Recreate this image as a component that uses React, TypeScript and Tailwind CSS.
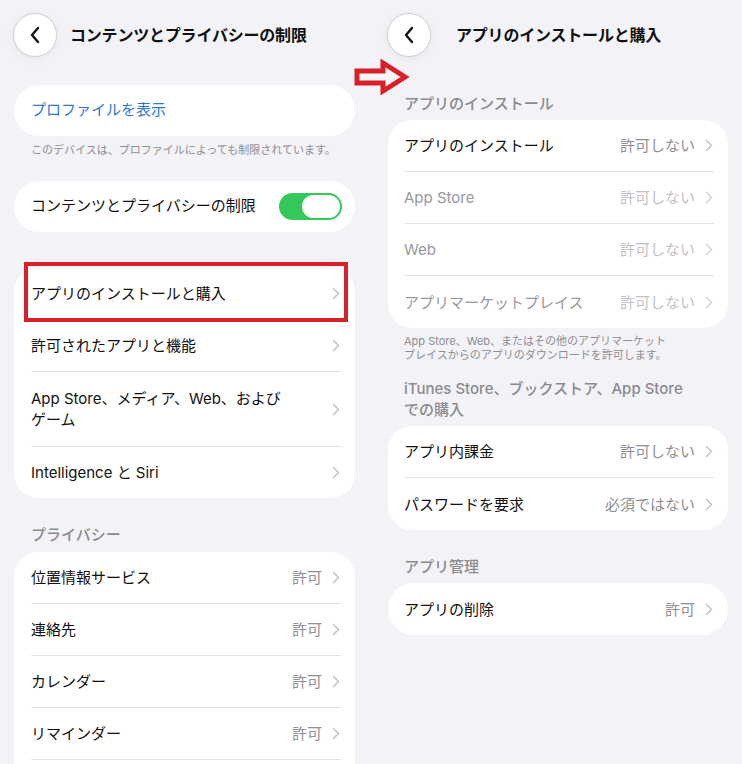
import React from 'react'

const font = { fontFamily: "Inter, 'Noto Sans CJK JP', 'Noto Sans', sans-serif" }

// small grey chevron used at the right end of a row
const Chevron = ({ light = false }: { light?: boolean }) => (
  <svg width="8" height="13" viewBox="0 0 8 13" className="shrink-0">
    <polyline
      points="1.5,1.5 6.5,6.5 1.5,11.5"
      fill="none"
      stroke={light ? '#d4d4d8' : '#c4c4c8'}
      strokeWidth="1.6"
      strokeLinecap="round"
      strokeLinejoin="round"
    />
  </svg>
)

const BackButton = () => (
  <div className="w-[44px] h-[44px] -ml-[1px] shrink-0 rounded-full bg-white border border-[#cfcfd3] shadow-[0_2px_10px_rgba(0,0,0,0.06)] flex items-center justify-center">
    <svg width="12" height="18" viewBox="0 0 12 18">
      <polyline
        points="9,2 3,9 9,16"
        fill="none"
        stroke="#111"
        strokeWidth="2.4"
        strokeLinecap="round"
        strokeLinejoin="round"
      />
    </svg>
  </div>
)

interface RowProps {
  label: React.ReactNode
  value?: string
  dim?: boolean
  last?: boolean
  height?: string
  pl?: string
}

const Row = ({ label, value, dim = false, last = false, height = 'h-[52px]', pl = 'pl-[17px]' }: RowProps) => (
  <div className={`${pl} pr-[14px]`}>
    <div
      className={`flex items-center justify-between ${height} ${last ? '' : 'border-b border-[#e3e3e7]'}`}
    >
      <div className={`text-[15px] leading-[21px] ${dim ? 'text-[#98989d]' : 'text-[#111111]'}`}>{label}</div>
      <div className="flex items-center gap-[10px] pr-[1px]">
        {value && (
          <span className={`text-[15px] leading-[21px] ${dim ? 'text-[#c2c2c6]' : 'text-[#8e8e93]'}`}>{value}</span>
        )}
        <Chevron light={dim} />
      </div>
    </div>
  </div>
)

const SectionHeader = ({ children, className = '' }: { children: React.ReactNode; className?: string }) => (
  <div className={`text-[15px] leading-[20px] font-medium text-[#8a8a8f] ${className}`}>{children}</div>
)

export default function App() {
  return (
    <div style={font} className="relative flex w-[742px] h-[764px] overflow-hidden bg-[#f2f2f7]">
      {/* Left: コンテンツとプライバシーの制限 */}
      <div className="w-[371px] shrink-0 pl-[14px] pr-[16px]">
        <div className="flex items-center gap-[13px] pt-[13px]">
          <BackButton />
          <div className="text-[16px] font-bold text-[#111] tracking-[-0.2px]">コンテンツとプライバシーの制限</div>
        </div>

        <div className="mt-[28px] h-[51px] rounded-[26px] bg-white flex items-center pl-[17px]">
          <span className="text-[15px] text-[#2c79cf]">プロファイルを表示</span>
        </div>
        <div className="mt-[7px] pl-[17px] text-[11px] leading-[14px] text-[#8e8e93]">
          このデバイスは、プロファイルによっても制限されています。
        </div>

        <div className="mt-[24px] h-[51px] rounded-[26px] bg-white flex items-center justify-between pl-[17px] pr-[13px]">
          <span className="text-[15px] text-[#111]">コンテンツとプライバシーの制限</span>
          <div className="w-[63px] h-[27px] rounded-full bg-[#34c759] flex justify-end p-[2px]">
            <div className="w-[38px] h-full rounded-full bg-white" />
          </div>
        </div>

        <div className="relative mt-[36px] rounded-[24px] bg-white">
          <Row label="アプリのインストールと購入" />
          <Row label="許可されたアプリと機能" />
          <Row
            label={
              <>
                App Store、メディア、Web、および
                <br />
                ゲーム
              </>
            }
            height="h-[75px]"
          />
          <Row label="Intelligence と Siri" last height="h-[51px]" />
          {/* highlight box */}
          <div className="absolute left-[10px] -top-[6px] w-[324px] h-[60px] border-[4px] border-[#d8202b]" />
        </div>

        <SectionHeader className="mt-[27px] pl-[17px]">プライバシー</SectionHeader>
        <div className="mt-[7px] rounded-t-[24px] bg-white pb-[40px]">
          <Row label="位置情報サービス" value="許可" />
          <Row label="連絡先" value="許可" />
          <Row label="カレンダー" value="許可" />
          <Row label="リマインダー" value="許可" />
        </div>
      </div>

      {/* Right: アプリのインストールと購入 */}
      <div className="w-[371px] shrink-0 pl-[17px] pr-[14px]">
        <div className="flex items-center gap-[25px] pt-[13px]">
          <BackButton />
          <div className="text-[16px] font-bold text-[#111] tracking-[-0.2px]">アプリのインストールと購入</div>
        </div>

        <SectionHeader className="mt-[37px] pl-[16px]">アプリのインストール</SectionHeader>
        <div className="mt-[6px] rounded-[24px] bg-white">
          <Row pl="pl-[16px]" label="アプリのインストール" value="許可しない" />
          <Row pl="pl-[16px]" label="App Store" value="許可しない" dim />
          <Row pl="pl-[16px]" label="Web" value="許可しない" dim />
          <Row pl="pl-[16px]" label="アプリマーケットプレイス" value="許可しない" dim last />
        </div>
        <div className="mt-[6px] pl-[16px] text-[11px] leading-[14px] text-[#8e8e93]">
          App Store、Web、またはその他のアプリマーケット
          <br />
          プレイスからのアプリのダウンロードを許可します。
        </div>

        <SectionHeader className="mt-[16px] pl-[16px] leading-[21px]">
          iTunes Store、ブックストア、App Store
          <br />
          での購入
        </SectionHeader>
        <div className="mt-[6px] rounded-[24px] bg-white">
          <Row pl="pl-[16px]" label="アプリ内課金" value="許可しない" />
          <Row pl="pl-[16px]" label="パスワードを要求" value="必須ではない" last />
        </div>

        <SectionHeader className="mt-[27px] pl-[16px]">アプリ管理</SectionHeader>
        <div className="mt-[6px] rounded-[26px] bg-white">
          <Row pl="pl-[16px]" label="アプリの削除" value="許可" last />
        </div>
      </div>

      {/* red arrow between the two screens */}
      <svg className="absolute left-[352px] top-[58px]" width="58" height="38" viewBox="0 0 58 38">
        <path
          d="M5 13 L31 13 L31 5 L53 19 L31 33 L31 25 L5 25 Z"
          fill="#f6f6f9"
          stroke="#d8202b"
          strokeWidth="5"
          strokeLinejoin="miter"
        />
      </svg>
    </div>
  )
}
